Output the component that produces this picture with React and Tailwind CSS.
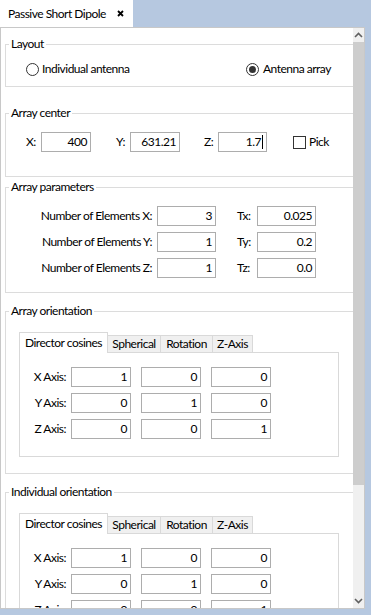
import { useState } from 'react'

const font = { fontFamily: 'Lato, "Noto Sans", sans-serif' }

function Field({ value, w = 'w-[60px]', caret = false }) {
  return (
    <div className={`${w} h-[20px] shrink-0 border border-[#adadad] bg-white flex items-center justify-end pr-[3px] text-[12px] leading-none`}>
      <span>{value}</span>
      {caret && <span className="ml-[1px] w-px h-[14px] bg-black" />}
    </div>
  )
}

function Radio({ checked }) {
  return (
    <span className="w-[13px] h-[13px] shrink-0 rounded-full border border-[#333] bg-white flex items-center justify-center">
      {checked && <span className="w-[7px] h-[7px] rounded-full bg-[#333]" />}
    </span>
  )
}

function Group({ title, className = '', children }) {
  return (
    <fieldset className={`ml-[4px] w-[360px] border border-[#dcdcdc] px-0 ${className}`}>
      <legend className="ml-[3px] px-[2px] text-[12px] leading-[16px] whitespace-nowrap">{title}</legend>
      {children}
    </fieldset>
  )
}

function Chevron({ down = false }) {
  return (
    <svg width="9" height="6" viewBox="0 0 9 6" className={down ? 'rotate-180' : ''}>
      <path d="M1 5 L4.5 1.5 L8 5" fill="none" stroke="#606060" strokeWidth="1.6" />
    </svg>
  )
}

function AxisTabs({ rows }) {
  const tabs = ['Director cosines', 'Spherical', 'Rotation', 'Z-Axis']
  const widths = ['w-[89px]', 'w-[54px]', 'w-[53px]', 'w-[41px]']
  return (
    <div className="ml-[13px]">
      <div className="flex items-end h-[20px]">
        {tabs.map((t, i) => (
          <div
            key={t}
            className={`${widths[i]} shrink-0 whitespace-nowrap flex items-center justify-center text-[12px] border border-b-0 border-[#d9d9d9] ${
              i === 0 ? 'h-[21px] -mb-px bg-white relative z-10' : 'h-[17px] bg-[#f0f0f0] -ml-px'
            }`}
          >
            {t}
          </div>
        ))}
      </div>
      <div className="w-[320px] h-[105px] border border-[#d9d9d9] bg-white pt-[14px] flex flex-col gap-[6px]">
        {rows.map(([label, a, b, c]) => (
          <div key={label} className="flex items-center">
            <span className="w-[46px] text-right text-[12px] whitespace-nowrap">{label}</span>
            <div className="ml-[5px]"><Field value={a} /></div>
            <div className="ml-[10px]"><Field value={b} /></div>
            <div className="ml-[10px]"><Field value={c} /></div>
          </div>
        ))}
      </div>
    </div>
  )
}

export default function App() {
  const [mode, setMode] = useState('array')
  const rows = [
    ['X Axis:', '1', '0', '0'],
    ['Y Axis:', '0', '1', '0'],
    ['Z Axis:', '0', '0', '1'],
  ]

  return (
    <div className="w-[371px] h-[615px] bg-[#b6c8e0] flex flex-col overflow-hidden text-black tracking-[-0.5px]" style={font}>
      {/* tab strip */}
      <div className="h-[27px] shrink-0 flex">
        <div className="w-[133px] h-[27px] bg-white flex items-center pl-[8px] text-[12px] whitespace-nowrap">
          <span>Passive Short Dipole</span>
          <svg width="7" height="7" viewBox="0 0 7 7" className="ml-[11px] shrink-0">
            <path d="M1 1 L6 6 M6 1 L1 6" stroke="#000" strokeWidth="1.8" />
          </svg>
        </div>
      </div>

      {/* panel */}
      <div className="w-[365px] h-[582px] border border-[#c8c8c8] bg-white flex">
        <div className="w-[352px] h-full overflow-hidden">
          <div className="w-[364px] pt-[8px]">
            <Group title="Layout" className="pt-[9px] pb-[9px]">
              <div className="flex items-center h-[16px] pl-[20px] text-[12px] whitespace-nowrap">
                <label className="w-[220px] flex items-center gap-[3px]" onClick={() => setMode('single')}>
                  <Radio checked={mode === 'single'} />
                  <span>Individual antenna</span>
                </label>
                <label className="flex items-center gap-[4px]" onClick={() => setMode('array')}>
                  <Radio checked={mode === 'array'} />
                  <span>Antenna array</span>
                </label>
              </div>
            </Group>

            <Group title="Array center" className="mt-[18px] pt-[11px] pb-[24px]">
              <div className="flex items-center pl-[20px] text-[12px]">
                <span className="w-[15px]">X:</span>
                <Field value="400" w="w-[50px]" />
                <span className="ml-[25px] w-[14px]">Y:</span>
                <Field value="631.21" w="w-[50px]" />
                <span className="ml-[24px] w-[14px]">Z:</span>
                <Field value="1.7" w="w-[49px]" caret />
                <span className="ml-[26px] w-[13px] h-[13px] border border-[#333] bg-white" />
                <span className="ml-[3px]">Pick</span>
              </div>
            </Group>

            <Group title="Array parameters" className="mt-[2px] pt-[11px] pb-[14px]">
              <div className="flex flex-col gap-[6px] text-[12px]">
                {[
                  ['X', '3', 'Tx:', '0.025'],
                  ['Y', '1', 'Ty:', '0.2'],
                  ['Z', '1', 'Tz:', '0.0'],
                ].map(([axis, n, t, v]) => (
                  <div key={axis} className="flex items-center">
                    <span className="w-[146px] text-right whitespace-nowrap">Number of Elements {axis}:</span>
                    <div className="ml-[5px]"><Field value={n} w="w-[59px]" /></div>
                    <span className="ml-[21px] w-[20px]">{t}</span>
                    <Field value={v} w="w-[59px]" />
                  </div>
                ))}
              </div>
            </Group>

            <Group title="Array orientation" className="mt-[10px] pt-[13px] pb-[16px]">
              <AxisTabs rows={rows} />
            </Group>

            <Group title="Individual orientation" className="mt-[10px] pt-[13px] pb-[16px]">
              <AxisTabs rows={rows} />
            </Group>
          </div>
        </div>

        {/* scrollbar */}
        <div className="w-[11px] h-full bg-[#f0f0f0] flex flex-col">
          <div className="h-[14px] flex items-center justify-center"><Chevron /></div>
          <div className="h-[443px] bg-[#cdcdcd]" />
          <div className="flex-1" />
          <div className="h-[14px] flex items-center justify-center"><Chevron down /></div>
        </div>
      </div>
    </div>
  )
}
